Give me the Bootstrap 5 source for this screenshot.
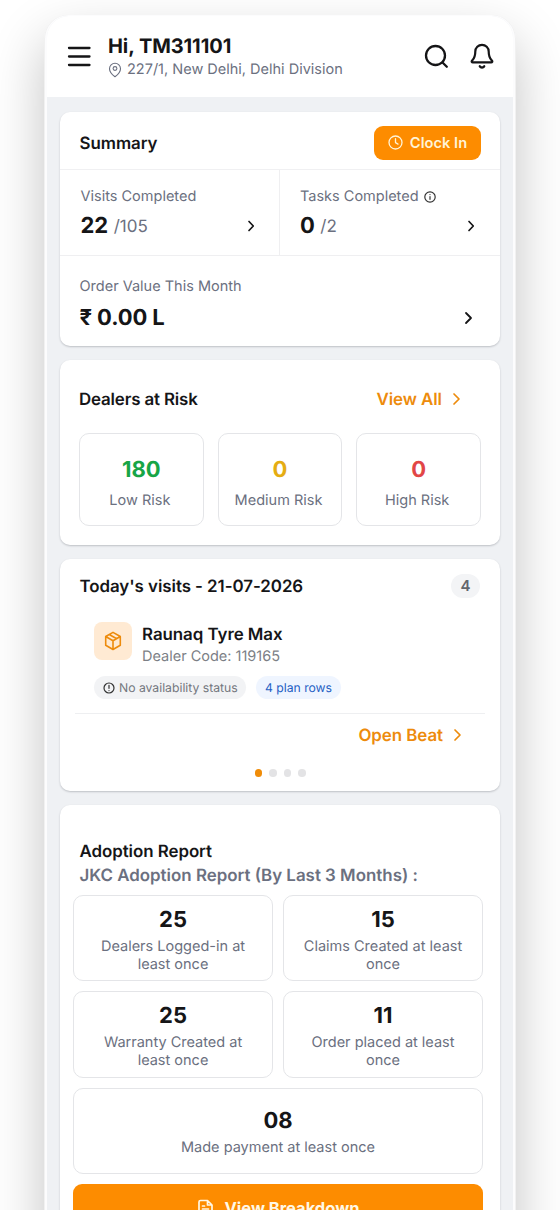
<!DOCTYPE html>
<html lang="en">
<head>
<meta charset="utf-8">
<meta name="viewport" content="width=device-width, initial-scale=1">
<title>Field Dashboard</title>
<link href="https://cdn.jsdelivr.net/npm/bootstrap@5.3.0/dist/css/bootstrap.min.css" rel="stylesheet">
<style>
  html, body { height: 1210px; overflow: hidden; }
  body { font-family: Inter, "Liberation Sans", sans-serif; background: #fff; color: #151517; line-height: 20px; text-rendering: geometricPrecision; }
  svg { display: block; flex: none; fill: none; stroke: currentColor; stroke-linecap: round; stroke-linejoin: round; }
  .phone { width: 472px; height: 1300px; margin: 15px 0 0 44px; padding: 1px 3px 0; border-radius: 24px; background: #fcfcfd;
    box-shadow: 0 24px 54px rgba(0,0,0,.24), inset 1px 0 0 #f1f1f1, inset -1px 0 0 #f1f1f1; }
  .screen { height: 100%; border-radius: 22px; background: #eff1f4; }
  .topbar { height: 81px; background: #fff; padding: 20px 18px 0 20px; }
  .hello { font-size: 20px; font-weight: 700; line-height: 20px; letter-spacing: -.07px; }
  .muted { color: #6b7080; }
  .addr { font-size: 14.5px; line-height: 20px; margin-top: 4px; }
  .panel { margin: 0 13px 14px; background: #fff; border-radius: 10px; box-shadow: 0 1px 2px rgba(20,25,35,.22); }
  .title { font-size: 16.9px; font-weight: 600; letter-spacing: -.05px; }
  .s-head { height: 58px; padding: 0 19px 0 19.5px; border-bottom: 1px solid #f0f0f2; }
  .clock { width: 107px; height: 34px; border-radius: 9px; background: #fd8c00; color: #fff3d6; font-size: 14.7px; font-weight: 600; }
  .clock span { padding-top: 1px; }
  .cell { height: 86px; padding: 17px 24px 0 20.5px; border-bottom: 1px solid #efeff1; }
  .cell + .cell { padding-left: 20px; }
  .cell-l { width: 220px; padding-right: 23px; border-right: 1px solid #efeff1; }
  .lbl { font-size: 14.5px; line-height: 20px; }
  .val { font-size: 22px; font-weight: 700; line-height: 30px; }
  .of { font-size: 17px; }
  .orange { color: #ed8b0c; }
  .tile { border: 1px solid #e4e5e8; border-radius: 10px; text-align: center; }
  .risk { display: grid; grid-template-columns: repeat(3, 1fr); gap: 14px; margin-top: 23px; }
  .risk .tile { height: 93px; padding-top: 21px; }
  .risk .lbl { padding: 6px 3px 0 0; }
  .pill { height: 23px; border-radius: 12px; font-size: 12.2px; }
  .boxicon { width: 38px; height: 38px; border-radius: 8px; background: #ffead3; }
  .count { width: 29px; height: 24px; border-radius: 12px; background: #f3f4f6; font-size: 15px; font-weight: 600; color: #63666d; }
  .dots { gap: 7px; }
  .dots i { width: 7.5px; height: 7.5px; border-radius: 50%; background: #e3e3e5; }
  .dots i:first-child { background: #f08c08; }
  .report { display: grid; grid-template-columns: 1fr 1fr; gap: 10px; }
  .report .tile { height: 86.3px; padding-top: 9px; font-size: 14.5px; line-height: 18px; }
  .report .muted { margin-top: 3px; }
  .report .wide { grid-column: 1 / 3; padding-top: 17px; }
  .breakdown { grid-column: 1 / 3; height: 48px; border-radius: 9px; background: #fd8c00; color: #fff8e6; font-weight: 700; font-size: 16.5px; }
</style>
</head>
<body>
<div class="phone"><div class="screen overflow-hidden">
  <header class="topbar d-flex">
    <svg class="mt-2" width="24" height="26" viewBox="0 0 24 26" stroke-width="2.300"><path d="M2 4h20.500M2 12.500h20.500M2 21h20.500"/></svg>
    <div class="flex-grow-1" style="margin-left:17px">
      <div class="hello">Hi, TM311101</div>
      <div class="addr muted d-flex align-items-center"><svg width="14" height="16" viewBox="0 0 14 16" stroke-width="1.100" style="margin-right:5px"><path d="M12.500 6.700c0 4-5.500 8-5.500 8s-5.500-4-5.500-8a5.500 5.500 0 0 1 11 0z"/><circle cx="7" cy="6.500" r="1.900"/></svg><span>227/1, New Delhi, Delhi Division</span></div>
    </div>
    <svg width="26" height="26" viewBox="0 0 26 26" stroke-width="2.3" style="margin-top:8px;margin-right:20px"><circle cx="12.500" cy="11.500" r="9.500"/><path d="M19.500 18.500l4.300 4.300"/></svg>
    <svg width="26" height="28" viewBox="0 0 26 28" stroke-width="2.2" style="margin-top:6px"><path d="M6.300 9.500a6.700 6.700 0 0 1 13.400 0c0 6 1.500 7.200 3.200 9 .9 1 .4 1.900-.8 1.900H3.900c-1.200 0-1.700-.9-.8-1.900 1.700-1.800 3.200-3 3.200-9z"/><path d="M10.800 24.300c1 1.600 3.400 1.600 4.400 0" stroke-width="2.300"/></svg>
  </header>

  <section class="panel" style="margin-top:15px">
    <div class="s-head d-flex align-items-center justify-content-between pt-1"><span class="title" style="padding-top:2px">Summary</span>
      <button class="clock btn p-0 border-0 d-flex align-items-center justify-content-center"><svg width="15" height="15" viewBox="0 0 15 15" stroke-width="1.300" style="margin-right:7px"><circle cx="7.500" cy="7.500" r="6.500"/><path d="M7.500 3.600v4l2.500 1.500"/></svg><span>Clock In</span></button></div>
    <div class="d-flex">
      <div class="cell cell-l"><div class="lbl muted">Visits Completed</div>
        <div class="d-flex align-items-center" style="margin-top:3.5px"><span class="val">22</span><span class="of muted" style="margin:2px 0 0 5.5px">/105</span><svg class="ms-auto" width="10" height="12" viewBox="0 0 10 12" stroke-width="1.700"><path d="M3 1.500L7.300 6 3 10.500"/></svg></div></div>
      <div class="cell flex-grow-1"><div class="lbl muted d-flex align-items-center"><span>Tasks Completed</span><svg width="12" height="12" viewBox="0 0 12 12" stroke-width="1.200" style="margin-left:5px;color:#333"><circle cx="6" cy="6" r="5.200"/><path d="M6 5.600v2.700M6 3.500v.1"/></svg></div>
        <div class="d-flex align-items-center" style="margin-top:3.5px"><span class="val">0</span><span class="of muted" style="margin:2px 0 0 5.5px">/2</span><svg class="ms-auto" width="10" height="12" viewBox="0 0 10 12" stroke-width="1.700"><path d="M3 1.500L7.300 6 3 10.500"/></svg></div></div>
    </div>
    <div style="height:90px;padding:21px 26px 0 19.500px"><div class="lbl muted">Order Value This Month</div>
      <div class="d-flex align-items-center" style="margin-top:8px"><span class="val" style="line-height:26px;letter-spacing:-.1px">₹ 0.00 L</span><svg class="ms-auto" width="11" height="14" viewBox="0 0 11 14" stroke-width="1.800" style="margin-bottom:1px"><path d="M3 2l5 5-5 5"/></svg></div></div>
  </section>

  <section class="panel" style="height:185px;padding:30px 19px 0">
    <div class="d-flex align-items-center justify-content-between"><span class="title" style="letter-spacing:-.15px">Dealers at Risk</span><span class="title orange d-flex align-items-center" style="margin-right:19px"><span>View All</span><svg width="10" height="14" viewBox="0 0 10 14" stroke-width="1.700" style="margin:0 0 2px 10px"><path d="M2 2l5 5-5 5"/></svg></span></div>
    <div class="risk">
      <div class="tile"><div class="val" style="color:#17a546">180</div><div class="lbl muted">Low Risk</div></div>
      <div class="tile"><div class="val" style="color:#e5ad12">0</div><div class="lbl muted">Medium Risk</div></div>
      <div class="tile"><div class="val" style="color:#e24646">0</div><div class="lbl muted">High Risk</div></div>
    </div>
  </section>

  <section class="panel" style="height:232px;padding:15px 15px 0">
    <div class="d-flex align-items-center justify-content-between" style="height:24px;padding:0 5px 0 4.500px"><span class="title" style="padding-top:2px">Today's visits - 21-07-2026</span><span class="count d-flex align-items-center justify-content-center">4</span></div>
    <div class="d-flex" style="margin:24px 0 0 19px">
      <span class="boxicon d-flex align-items-center justify-content-center orange"><svg width="18" height="20" viewBox="0 0 18 20" stroke-width="1.600"><path d="M9 1.400l7.300 4.100v8.700L9 18.500l-7.300-4.300V5.500zM1.700 5.500L9 9.700l7.300-4.200M9 9.700v8.800M5.200 3.500l7.500 4.200"/></svg></span>
      <div style="margin-left:10px"><div class="title" style="line-height:24px;padding-top:1px">Raunaq Tyre Max</div><div class="lbl" style="line-height:20px;color:#7c7f86">Dealer Code: 119165</div></div>
    </div>
    <div class="d-flex" style="margin:9px 0 0 19px;gap:10px">
      <span class="pill d-flex align-items-center" style="width:152px;background:#f2f3f5;color:#74777e;padding-left:9px"><svg width="12" height="12" viewBox="0 0 12 12" stroke-width="1.200" style="margin-right:4px;color:#333"><circle cx="6" cy="6" r="5"/><path d="M6 3.300v3M6 8.500v.1"/></svg><span>No availability status</span></span>
      <span class="pill d-flex align-items-center justify-content-center" style="width:85px;background:#eff5ff;color:#1f5fc4">4 plan rows</span>
    </div>
    <div style="margin-top:14px;border-top:1px solid #eeeff1"></div>
    <div class="title orange d-flex align-items-center justify-content-end" style="margin:12px 22px 0 0"><span>Open Beat</span><svg width="10" height="14" viewBox="0 0 10 14" stroke-width="1.700" style="margin:0 0 2px 10px"><path d="M2 2l5 5-5 5"/></svg></div>
    <div class="dots d-flex justify-content-center" style="margin-top:23px"><i></i><i></i><i></i><i></i></div>
  </section>

  <section class="panel" style="height:480px;padding:35px 17px 0 13px">
    <div class="title" style="line-height:24px;padding-left:6.5px">Adoption Report</div>
    <div class="title muted" style="line-height:24px;padding-left:6.5px;letter-spacing:0">JKC Adoption Report (By Last 3 Months) :</div>
    <div class="report" style="margin-top:7px">
      <div class="tile"><div class="val">25</div><div class="muted">Dealers Logged-in at<br>least once</div></div>
      <div class="tile"><div class="val">15</div><div class="muted">Claims Created at least<br>once</div></div>
      <div class="tile"><div class="val">25</div><div class="muted">Warranty Created at<br>least once</div></div>
      <div class="tile"><div class="val">11</div><div class="muted">Order placed at least<br>once</div></div>
      <div class="tile wide"><div class="val">08</div><div class="muted">Made payment at least once</div></div>
      <button class="breakdown btn border-0 p-0 d-flex align-items-center justify-content-center"><svg width="17" height="18" viewBox="0 0 17 18" stroke-width="1.700" style="margin-right:11px"><path d="M10.500 1.500h-7a1.500 1.500 0 0 0-1.500 1.500v12a1.500 1.500 0 0 0 1.500 1.500h10a1.500 1.500 0 0 0 1.500-1.500V6zM10.500 1.500V6H15M5.500 7h2M5.500 10h6M5.500 13h6"/></svg><span>View Breakdown</span></button>
    </div>
  </section>
</div></div>
<script src="https://cdn.jsdelivr.net/npm/bootstrap@5.3.0/dist/js/bootstrap.bundle.min.js"></script>
</body>
</html>
